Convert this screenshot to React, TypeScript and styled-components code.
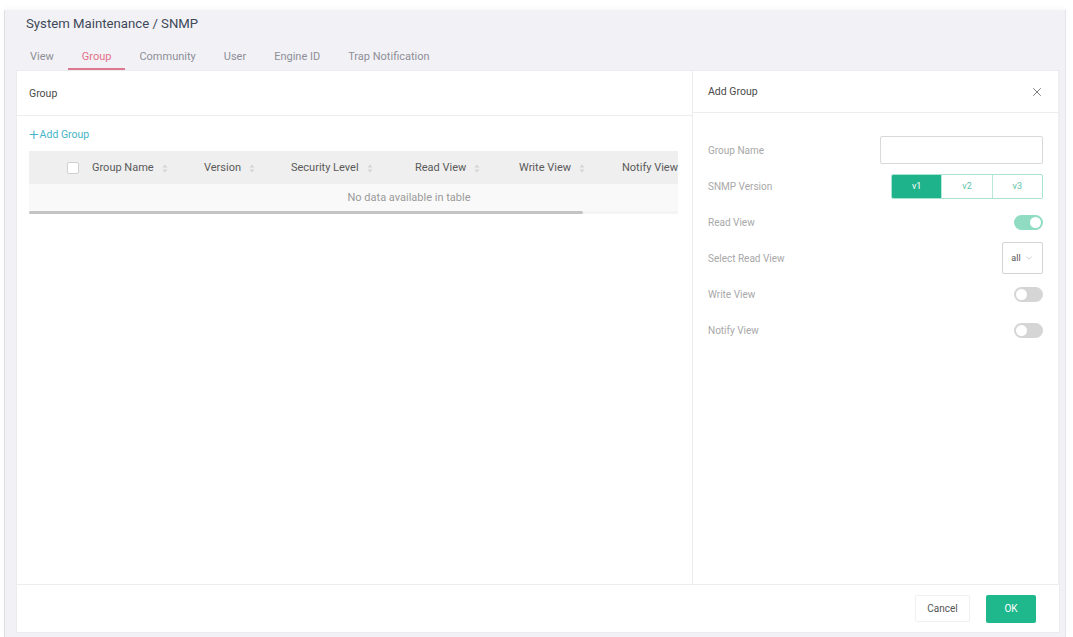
import React from 'react';
import styled, {createGlobalStyle} from 'styled-components';
import {X, ChevronDown} from 'lucide-react';

const GlobalStyle = createGlobalStyle`
  html, body {
    margin: 0;
    padding: 0;
    background: #ffffff;
  }
  body {
    font-family: Roboto, "Liberation Sans", Arial, sans-serif;
  }
  * {
    box-sizing: border-box;
  }
`;

const tabs = ['View', 'Group', 'Community', 'User', 'Engine ID', 'Trap Notification'];

const columns = [
    {title: 'Group Name', width: 112},
    {title: 'Version', width: 87},
    {title: 'Security Level', width: 124},
    {title: 'Read View', width: 104},
    {title: 'Write View', width: 103},
    {title: 'Notify View', width: 179},
];

const SortIcon = () => (
    <SortSvg width="6" height="9" viewBox="0 0 6 9">
        <path d="M3 0.5 L5.5 3.5 H0.5 Z" fill="#d4d4d4"/>
        <path d="M3 8.5 L5.5 5.5 H0.5 Z" fill="#d4d4d4"/>
    </SortSvg>
);

const App = () => {
    return (
        <>
            <GlobalStyle/>
            <Page>
                <Frame>
                    <Breadcrumb>System Maintenance / SNMP</Breadcrumb>
                    <TabBar>
                        {tabs.map((t) => (
                            <Tab key={t} $active={t === 'Group'}>{t}</Tab>
                        ))}
                    </TabBar>

                    <Card>
                        <Body>
                            <LeftPanel>
                                <PanelHeader $height={45} $padLeft={12}>Group</PanelHeader>
                                <LeftContent>
                                    <AddLink><Plus>+</Plus>Add Group</AddLink>
                                    <TableWrap>
                                        <Table>
                                            <colgroup>
                                                <col style={{width: 51}}/>
                                                {columns.map((c) => <col key={c.title} style={{width: c.width}}/>)}
                                            </colgroup>
                                            <thead>
                                            <tr>
                                                <HeadCell><Checkbox/></HeadCell>
                                                {columns.map((c) => (
                                                    <HeadCell key={c.title}>
                                                        {c.title}<SortIcon/>
                                                    </HeadCell>
                                                ))}
                                            </tr>
                                            </thead>
                                            <tbody>
                                            <tr>
                                                <EmptyCell colSpan={7}>No data available in table</EmptyCell>
                                            </tr>
                                            </tbody>
                                        </Table>
                                        <ScrollTrack>
                                            <ScrollThumb style={{width: `${(649 / 760) * 100}%`}}/>
                                        </ScrollTrack>
                                    </TableWrap>
                                </LeftContent>
                            </LeftPanel>

                            <RightPanel>
                                <PanelHeader $height={42} $padLeft={15}>
                                    Add Group
                                    <CloseButton><X size={14} strokeWidth={1.5}/></CloseButton>
                                </PanelHeader>
                                <Form>
                                    <FormRow>
                                        <Label>Group Name</Label>
                                        <TextInput/>
                                    </FormRow>
                                    <FormRow>
                                        <Label>SNMP Version</Label>
                                        <Segmented>
                                            <Segment $active>v1</Segment>
                                            <Segment>v2</Segment>
                                            <Segment>v3</Segment>
                                        </Segmented>
                                    </FormRow>
                                    <FormRow>
                                        <Label>Read View</Label>
                                        <Toggle $on/>
                                    </FormRow>
                                    <FormRow>
                                        <Label>Select Read View</Label>
                                        <SelectBox>all<ChevronDown size={10} strokeWidth={1.2}/></SelectBox>
                                    </FormRow>
                                    <FormRow>
                                        <Label>Write View</Label>
                                        <Toggle/>
                                    </FormRow>
                                    <FormRow>
                                        <Label>Notify View</Label>
                                        <Toggle/>
                                    </FormRow>
                                </Form>
                            </RightPanel>
                        </Body>

                        <Footer>
                            <CancelButton>Cancel</CancelButton>
                            <OkButton>OK</OkButton>
                        </Footer>
                    </Card>
                </Frame>
            </Page>
        </>
    );
};

export default App;

const Page = styled.div`
  width: 1073px;
  height: 637px;
  padding: 10px 7px 0 4px;
  overflow: hidden;
`

const Frame = styled.div`
  height: 627px;
  display: flex;
  flex-direction: column;
  background: #f2f2f6;
  border-left: 1px solid #dedee3;
  border-right: 1px solid #e6e6ea;
  box-shadow: 0 -2px 6px rgba(0, 0, 0, 0.03);
  padding: 6px 5px 4px 11px;
`

const Breadcrumb = styled.div`
  font-size: 13.2px;
  line-height: 16px;
  color: #3e4858;
  padding-left: 10px;
`

const TabBar = styled.div`
  display: flex;
  margin-top: 14px;
  height: 24px;
`

const Tab = styled.div<{ $active?: boolean }>`
  padding: 0 14px;
  font-size: 11px;
  line-height: 22px;
  color: ${({$active}) => ($active ? '#e2708a' : '#8e8e96')};
  border-bottom: 2px solid ${({$active}) => ($active ? '#dc7890' : 'transparent')};
`

const Card = styled.div`
  flex: 1;
  display: flex;
  flex-direction: column;
  background: #ffffff;
  border: 1px solid #ececf0;
`

const Body = styled.div`
  flex: 1;
  display: flex;
  min-height: 0;
`

const LeftPanel = styled.div`
  width: 676px;
  border-right: 1px solid #ececec;
  display: flex;
  flex-direction: column;
`

const RightPanel = styled.div`
  flex: 1;
  display: flex;
  flex-direction: column;
  border-right: 1px solid #f0f0f0;
`

const PanelHeader = styled.div<{ $height: number; $padLeft: number }>`
  height: ${({$height}) => $height}px;
  flex-shrink: 0;
  display: flex;
  align-items: center;
  justify-content: space-between;
  padding: 0 14px 0 ${({$padLeft}) => $padLeft}px;
  border-bottom: 1px solid #ededed;
  font-size: 10.5px;
  color: #4a4a4a;
`

const CloseButton = styled.span`
  display: flex;
  color: #6a6a6a;
`

const LeftContent = styled.div`
  padding: 10px 14px 0 12px;
`

const AddLink = styled.div`
  display: flex;
  align-items: center;
  height: 16px;
  font-size: 10.5px;
  color: #45b4c6;
`

const Plus = styled.span`
  font-size: 17px;
  font-weight: 300;
  line-height: 16px;
  margin-right: 1px;
`

const TableWrap = styled.div`
  margin-top: 9px;
  width: 649px;
  overflow: hidden;
`

const Table = styled.table`
  width: 760px;
  table-layout: fixed;
  border-collapse: collapse;
`

const HeadCell = styled.th`
  height: 33px;
  background: #efefef;
  text-align: left;
  font-weight: 400;
  font-size: 11px;
  color: #5a5a5a;
  white-space: nowrap;
  overflow: hidden;
  padding: 0 0 0 12px;
  &:first-child {
    padding-left: 38px;
  }
`

const SortSvg = styled.svg`
  margin-left: 8px;
  vertical-align: middle;
`

const Checkbox = styled.span`
  display: inline-block;
  vertical-align: middle;
  width: 12px;
  height: 12px;
  background: #ffffff;
  border: 1px solid #d0d0d0;
  border-radius: 2px;
`

const EmptyCell = styled.td`
  height: 27px;
  background: #f9f9f9;
  text-align: center;
  font-size: 11px;
  color: #9a9a9a;
`

const ScrollTrack = styled.div`
  height: 3px;
  background: #f4f4f4;
`

const ScrollThumb = styled.div`
  height: 3px;
  background: #c4c4c4;
  border-radius: 2px;
`

const Form = styled.div`
  padding: 19px 15px 0 15px;
`

const FormRow = styled.div`
  height: 36px;
  display: flex;
  align-items: center;
  justify-content: space-between;
`

const Label = styled.span`
  font-size: 10px;
  color: #a8a8a8;
`

const TextInput = styled.div`
  width: 163px;
  height: 28px;
  border: 1px solid #d9d9d9;
  border-radius: 2px;
`

const Segmented = styled.div`
  display: flex;
  width: 152px;
  height: 25px;
  border: 1px solid #a8e2d0;
  border-radius: 2px;
  overflow: hidden;
`

const Segment = styled.div<{ $active?: boolean }>`
  flex: 1;
  display: flex;
  align-items: center;
  justify-content: center;
  font-size: 9px;
  color: ${({$active}) => ($active ? '#ffffff' : '#5cc2a6')};
  background: ${({$active}) => ($active ? '#1fb38b' : '#ffffff')};
  & + & {
    border-left: 1px solid #b8e6d8;
  }
`

const Toggle = styled.span<{ $on?: boolean }>`
  position: relative;
  width: 29px;
  height: 15px;
  border-radius: 8px;
  background: ${({$on}) => ($on ? '#8fdcc3' : '#d5d5d5')};
  &::after {
    content: '';
    position: absolute;
    top: 2px;
    left: ${({$on}) => ($on ? '16px' : '2px')};
    width: 11px;
    height: 11px;
    border-radius: 50%;
    background: #ffffff;
  }
`

const SelectBox = styled.div`
  width: 41px;
  height: 32px;
  display: flex;
  align-items: center;
  justify-content: center;
  gap: 3px;
  border: 1px solid #d4d4d4;
  border-radius: 2px;
  font-size: 9px;
  color: #555;
  & svg {
    color: #999;
  }
`

const Footer = styled.div`
  height: 48px;
  flex-shrink: 0;
  display: flex;
  align-items: center;
  justify-content: flex-end;
  gap: 16px;
  padding-right: 23px;
  border-top: 1px solid #ededed;
`

const CancelButton = styled.button`
  width: 55px;
  height: 27px;
  border: 1px solid #f0f0f0;
  background: #ffffff;
  border-radius: 2px;
  font-family: inherit;
  font-size: 10px;
  color: #555;
`

const OkButton = styled.button`
  width: 50px;
  height: 28px;
  border: none;
  background: #1fb88d;
  border-radius: 2px;
  font-family: inherit;
  font-size: 10px;
  color: #ffffff;
`
